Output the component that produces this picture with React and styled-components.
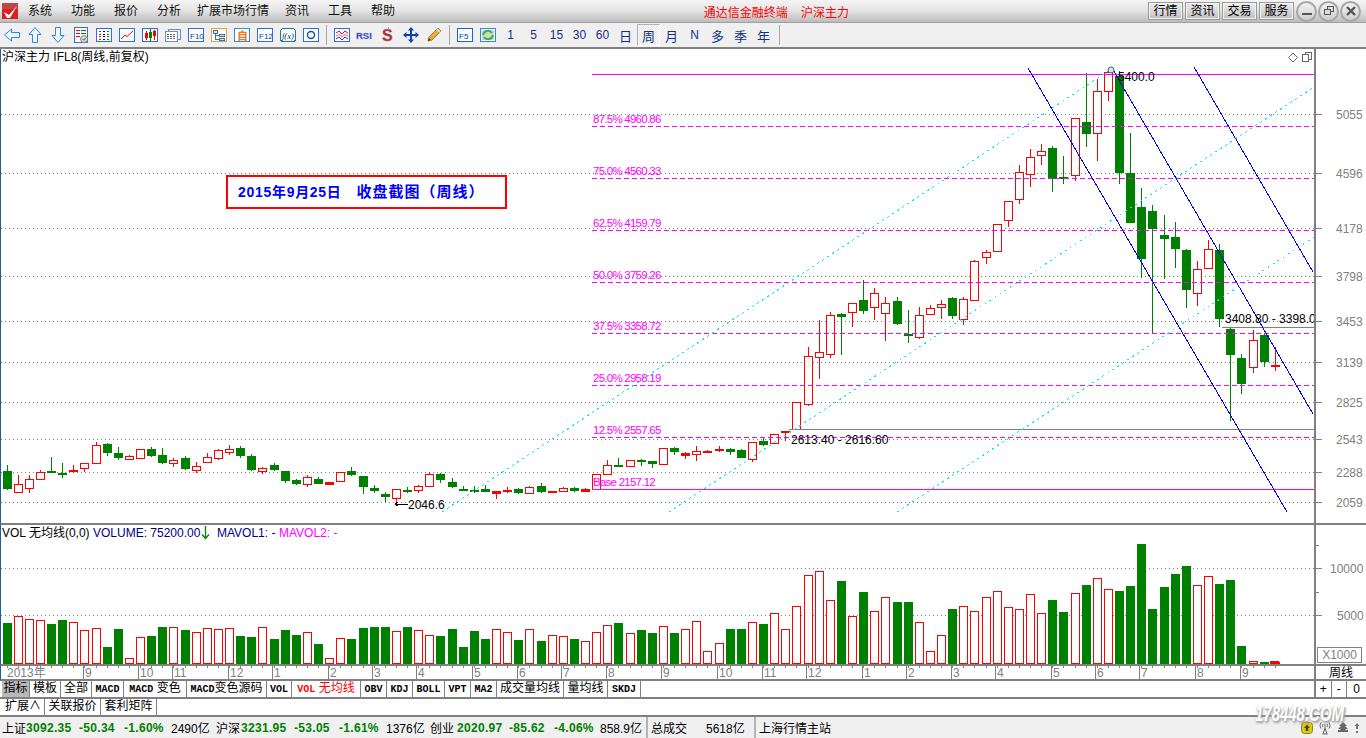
import React from "react";
import styled, { createGlobalStyle } from "styled-components";

const SANS = `"Liberation Sans", "Noto Sans CJK SC", sans-serif`;
const MONO = `"Liberation Mono", "Noto Sans CJK SC", monospace`;
const RED = "#ff0000";
const GREEN = "#008000";
const FUCHSIA = "#ff00ff";
const LINE = "#808080";

// candles are read off the chart: [colour, high, top, bottom, low], y = base + v / 3
const scale = (base, rows) =>
  rows.map(([c, h, t, b, l]) => ({
    up: c === "r",
    high: base + h / 3,
    top: base + t / 3,
    bottom: base + b / 3,
    low: base + l / 3,
  }));

const candles = [
  ...scale(430, [
    ["g", 105, 123, 177, 180], ["r", 135, 163, 185, 190], ["r", 135, 146, 173, 188], ["r", 120, 127, 146, 150],
    ["g", 82, 124, 126, 128], ["g", 100, 128, 130, 144], ["r", 105, 120, 122, 128], ["r", 100, 100, 115, 127],
    ["r", 37, 46, 98, 98], ["g", 40, 42, 68, 78], ["g", 50, 69, 84, 90], ["r", 75, 79, 86, 87],
    ["r", 58, 58, 83, 87], ["g", 52, 57, 78, 80], ["g", 55, 75, 98, 102], ["r", 85, 89, 98, 110],
    ["g", 78, 84, 117, 120], ["r", 95, 107, 119, 128], ["r", 70, 82, 97, 100], ["r", 57, 61, 85, 90],
    ["r", 45, 58, 67, 76], ["g", 48, 54, 78, 85], ["g", 72, 78, 120, 122], ["r", 110, 113, 122, 132],
    ["g", 100, 106, 120, 124], ["g", 123, 123, 152, 158], ["g", 148, 150, 161, 164], ["r", 136, 142, 163, 171],
    ["g", 142, 147, 161, 163], ["r", 155, 157, 163, 166], ["r", 127, 127, 154, 154], ["g", 112, 123, 134, 138],
    ["g", 138, 138, 170, 192], ["g", 165, 175, 182, 190], ["g", 185, 193, 197, 215], ["r", 178, 178, 203, 217],
    ["g", 170, 181, 184, 188], ["r", 165, 167, 181, 188], ["r", 127, 133, 169, 169], ["g", 128, 132, 150, 160],
    ["g", 145, 156, 170, 174], ["g", 168, 176, 178, 182], ["g", 168, 179, 182, 190], ["g", 165, 177, 185, 187],
    ["r", 182, 184, 190, 206], ["r", 172, 179, 181, 188], ["g", 175, 177, 188, 192], ["r", 168, 170, 190, 190],
    ["g", 160, 168, 185, 190], ["r", 182, 184, 187, 190], ["r", 172, 175, 184, 185], ["g", 172, 174, 182, 187],
    ["r", 175, 178, 184, 185], ["r", 133, 133, 178, 178],
  ]),
  ...scale(300, [
    ["r", 480, 496, 523, 523], ["g", 475, 495, 498, 499], ["r", 481, 481, 497, 497], ["g", 476, 481, 483, 497],
    ["g", 482, 483, 492, 503], ["r", 444, 444, 493, 493], ["g", 440, 444, 456, 465], ["r", 457, 458, 464, 476],
    ["r", 438, 454, 461, 482], ["r", 451, 453, 455, 456], ["r", 439, 446, 449, 455], ["g", 443, 447, 456, 464],
    ["g", 447, 450, 473, 473], ["r", 427, 427, 478, 485], ["g", 412, 423, 435, 438], ["r", 403, 403, 428, 428],
    ["r", 394, 394, 396, 422], ["r", 307, 307, 388, 388],
  ]),
  ...scale(60, [
    ["r", 860, 888, 1031, 1037], ["r", 780, 877, 892, 957], ["r", 756, 766, 883, 893], ["g", 760, 762, 770, 885],
    ["r", 730, 730, 757, 800], ["g", 660, 720, 752, 762], ["r", 685, 700, 740, 780], ["r", 712, 730, 760, 842],
    ["g", 712, 723, 792, 795], ["g", 750, 822, 824, 848], ["r", 742, 766, 832, 836], ["r", 736, 745, 763, 763],
    ["r", 720, 733, 742, 777], ["g", 712, 714, 767, 776], ["r", 710, 718, 778, 795], ["r", 600, 604, 721, 721],
    ["r", 571, 577, 592, 612], ["r", 493, 493, 574, 574], ["r", 424, 424, 481, 500], ["r", 315, 337, 418, 431],
    ["r", 267, 292, 343, 381], ["r", 252, 274, 284, 315], ["g", 258, 264, 358, 396], ["g", 288, 352, 354, 372],
    ["r", 175, 175, 346, 362], ["g", 40, 186, 221, 260], ["r", 58, 94, 220, 302], ["r", 30, 35, 94, 123],
    ["g", 33, 48, 339, 372], ["g", 219, 339, 488, 488], ["g", 384, 441, 596, 653], ["g", 435, 453, 507, 820],
    ["g", 465, 525, 537, 656], ["g", 486, 531, 567, 623], ["g", 568, 570, 690, 744], ["r", 603, 628, 700, 737],
    ["r", 540, 568, 625, 625], ["g", 552, 570, 776, 800], ["g", 805, 807, 885, 1082], ["g", 882, 894, 971, 1002],
    ["r", 810, 841, 922, 938], ["g", 820, 825, 906, 921], ["r", 860, 916, 919, 932],
  ]),
];

const volumeTops = [
  309, 289, 298, 301, 312, 300, 307, 331, 325, 381, 327, 415, 352, 348, 321, 322, 330, 337, 325, 328,
  325, 348, 351, 322, 357, 330, 345, 337, 372, 415, 355, 357, 324, 321, 321, 334, 321, 331, 346, 348,
  327, 381, 333, 357, 328, 337, 360, 328, 363, 346, 349, 357, 364, 337, 316, 309, 340, 330, 339, 319,
  339, 328, 304, 394, 370, 327, 327, 307, 312, 280, 328, 259, 166, 154, 241, 183, 289, 216, 274, 232,
  246, 246, 307, 394, 346, 267, 259, 274, 232, 214, 262, 268, 223, 280, 240, 276, 220, 195, 175, 208,
  213, 198, 72, 267, 201, 162, 138, 196, 169, 192, 180, 378, 424, 426, 427,
];

const slotX = (i) => Math.round(6.5 + i * 11.125);

const priceTicks = [
  [5055, 114], [4596, 173], [4178, 228], [3798, 276], [3453, 321],
  [3139, 362], [2825, 402], [2543, 439], [2288, 472], [2059, 502],
];
const fibLevels = [
  ["87.5% 4960.86", 126, 119], ["75.0% 4560.33", 178, 171], ["62.5% 4159.79", 230, 223], ["50.0% 3759.26", 282, 275],
  ["37.5% 3358.72", 333, 326], ["25.0% 2958.19", 385, 378], ["12.5% 2557.65", 437, 430],
];
const trendLines = [[1028, 68, 1287, 512], [1112, 68, 1313, 414], [1194, 67, 1313, 272]];
const channelLines = [[442, 512, 1113, 68], [669, 512, 1314, 87], [897, 512, 1314, 237]];
const months = [
  ["2013年", 5, 0], ["9", 83, 1], ["10", 138, 1], ["11", 172, 1], ["12", 228, 1], ["1", 272, 1], ["2", 328, 1], ["3", 372, 1],
  ["4", 416, 1], ["5", 472, 1], ["6", 517, 1], ["7", 561, 1], ["8", 606, 1], ["9", 661, 1], ["10", 717, 1], ["11", 762, 1],
  ["12", 806, 1], ["1", 862, 1], ["2", 906, 1], ["3", 951, 1], ["4", 995, 1], ["5", 1051, 1], ["6", 1095, 1], ["7", 1139, 1],
  ["8", 1195, 1], ["9", 1240, 1],
];

const menuItems = ["系统", "功能", "报价", "分析", "扩展市场行情", "资讯", "工具", "帮助"];
const quickButtons = ["行情", "资讯", "交易", "服务"];
const periods = ["1", "5", "15", "30", "60", "日", "周", "月", "N", "多", "季", "年"];
const tabs = [
  ["指标", 28], ["模板", 31], ["全部", 31], ["MACD", 32], ["MACD 变色", 63], ["MACD变色源码", 80], ["VOL", 25], ["VOL 无均线", 69],
  ["OBV", 26], ["KDJ", 26], ["BOLL", 32], ["VPT", 26], ["MA2", 26], ["成交量均线", 67], ["量均线", 44], ["SKDJ", 33],
];
const extraTabs = [["扩展∧", 43], ["关联报价", 56], ["套利矩阵", 56]];
const statusCells = [
  ["上证", 24, "t"], ["3092.35", 53, "n"], ["-50.34", 45, "n"], ["-1.60%", 47, "n"], ["2490亿", 45, "t"],
  ["沪深", 25, "t"], ["3231.95", 53, "n"], ["-53.05", 45, "n"], ["-1.61%", 47, "n"], ["1376亿", 44, "t"],
  ["创业", 27, "t"], ["2020.97", 52, "n"], ["-85.62", 45, "n"], ["-4.06%", 46, "n"], ["858.9亿", 46, "t"],
];

const GlobalStyle = createGlobalStyle`
  html, body { margin: 0; padding: 0; background: #fff; }
  body { font: 12px ${SANS}; color: #000; overflow: hidden; }
`;

const Frame = styled.div`
  width: 1366px;
  height: 738px;
  display: flex;
  flex-direction: column;
  position: relative;
  overflow: hidden;
`;

const MenuBar = styled.div`
  height: 22px;
  display: flex;
  align-items: center;
  background: linear-gradient(#f4f4f4, #e6e6e6 45%, #bcbcbc);
  border-bottom: 1px solid #a0a0a0;
`;
const Logo = styled.svg`
  width: 16px;
  height: 16px;
  margin: 0 0.5px 0 2px;
  flex: none;
`;
const MenuItem = styled.span`
  padding: 0 ${(p) => (p.$tight ? "6.5px" : "9.5px")};
  line-height: 22px;
  font-size: 12px;
  color: #111;
`;
const AppTitle = styled.div`
  margin: 0 auto;
  color: ${RED};
  font-size: 12px;
  white-space: pre;
`;
const QuickButtons = styled.div`
  display: flex;
  gap: 2px;
  padding-right: 2px;
`;
const QuickButton = styled.span`
  width: 33px;
  height: 16px;
  line-height: 16px;
  text-align: center;
  border: 1px solid #9a9a9a;
  background: linear-gradient(#ececec, #d6d6d6 55%, #bdbdbd);
  box-shadow: inset 0 0 0 1px #f4f4f4;
  font-size: 12px;
`;
const WindowButtons = styled.div`
  display: flex;
  gap: 1px;
  padding-right: 5px;
`;
const RoundButton = styled.span`
  width: 17px;
  height: 17px;
  border: 2px solid #a6a6a6;
  border-radius: 50%;
  display: flex;
  align-items: center;
  justify-content: center;
  background: linear-gradient(#f2f2f2, #cfcfcf);
`;

const ToolBar = styled.div`
  height: 24px;
  display: flex;
  align-items: center;
  background: #f0f0f0;
  border-bottom: 2px solid ${LINE};
`;
const ToolButton = styled.span`
  width: 23px;
  height: 22px;
  flex: none;
  display: flex;
  align-items: center;
  justify-content: center;
  color: #103088;
  font-size: ${(p) => (p.$cjk ? "13px" : "12px")};
  box-sizing: border-box;
  ${(p) =>
    p.$pressed &&
    `
    border: 1px solid;
    border-color: #b0b0b0 #fff #fff #b0b0b0;
    background: repeating-conic-gradient(#fafafa 0 25%, #e8e8e8 0 50%) 0 0 / 2px 2px;
  `}
`;
const ToolSeparator = styled.i`
  width: 1px;
  height: 20px;
  margin: 0 3px 0 4px;
  flex: none;
  background: #a8a8a8;
`;

const Pane = styled.div`
  height: ${(p) => p.$h}px;
  display: flex;
  flex: none;
  box-sizing: border-box;
  border-left: 1px solid #1f5f8f;
  border-bottom: 2px solid ${LINE};
`;
const Plot = styled.div`
  position: relative;
  width: 1313px;
  flex: none;
  overflow: hidden;
  svg { display: block; }
`;
const Axis = styled.div`
  flex: 1;
  position: relative;
  border-left: 2px solid ${LINE};
  svg { display: block; }
`;
const PaneHeader = styled.div`
  position: absolute;
  left: ${(p) => p.$left || 1}px;
  top: 1px;
  line-height: 14px;
  white-space: pre;
  color: ${(p) => p.$color || "#000"};
`;
const DownMark = styled.svg`
  position: absolute;
  left: 200px;
  top: 0;
`;
const CornerIcons = styled.svg`
  position: absolute;
  right: 0;
  top: 2px;
`;
const NoteBox = styled.div`
  position: absolute;
  left: 225px;
  top: 126px;
  width: 277px;
  height: 30px;
  border: 2px solid ${RED};
  color: #0000ff;
  font: bold 14px ${SANS};
  line-height: 29px;
  letter-spacing: 0.7px;
  text-indent: 10px;
  white-space: pre;
`;
const NoteWide = styled.span`
  font-size: 15px;
  letter-spacing: 1px;
  margin-left: 15px;
`;
const ScaleBox = styled.span`
  position: absolute;
  left: 1px;
  bottom: 1px;
  width: 43px;
  height: 14px;
  line-height: 14px;
  text-align: center;
  color: ${LINE};
  border: 1px solid ${LINE};
  font-size: 12px;
`;
const ChartText = styled.text`
  font: 12px ${SANS};
  fill: ${(p) => p.$fill || "#000"};
`;
const FibText = styled.text`
  font: 11.5px ${SANS};
  letter-spacing: -0.75px;
  fill: ${FUCHSIA};
`;
const PeriodLabel = styled.span`
  flex: 1;
  line-height: 15px;
  text-align: center;
  font-size: 12px;
`;
const KeyRow = styled.div`
  flex: 1;
  display: flex;
  align-items: stretch;
`;
const KeyCell = styled.span`
  flex: ${(p) => (p.$wide ? 1.3 : 1)};
  text-align: center;
  line-height: 16px;
  font-size: 12px;
  border-left: ${(p) => (p.$first ? "none" : `1px solid ${LINE}`)};
`;

const TabStrip = styled.div`
  height: 18px;
  flex: none;
  display: flex;
  box-sizing: border-box;
  padding-left: 2px;
  border-bottom: 2px solid ${LINE};
`;
const Tab = styled.span`
  width: ${(p) => p.$w}px;
  flex: none;
  box-sizing: border-box;
  line-height: 15px;
  text-align: center;
  white-space: pre;
  font-size: 12px;
  border-right: 1px solid ${LINE};
  color: ${(p) => (p.$hot ? RED : "#000")};
  background: ${(p) => (p.$active ? "#b8b8b8" : "transparent")};
`;
const Latin = styled.span`
  font: bold 10px ${MONO};
`;
const TabTail = styled.div`
  margin-left: auto;
  width: 52px;
  display: flex;
  box-sizing: border-box;
  border-left: 2px solid ${LINE};
`;

const StatusBar = styled.div`
  flex: 1;
  display: flex;
  align-items: center;
  background: #f0f0f0;
  padding-left: 2px;
`;
const StatusCell = styled.span`
  width: ${(p) => p.$w}px;
  flex: none;
  white-space: pre;
  ${(p) => p.$num && `color: ${GREEN}; font-weight: bold; letter-spacing: 0.3px;`}
`;
const StatusGroup = styled.span`
  flex: none;
  height: 100%;
  width: ${(p) => p.$w}px;
  display: flex;
  align-items: center;
  box-sizing: border-box;
  padding-left: 3px;
  border-left: 2px solid #b4b4b4;
  gap: ${(p) => p.$gap || 0}px;
`;
const Tray = styled.div`
  margin-left: auto;
  display: flex;
  align-items: center;
  gap: 5px;
  padding-right: 6px;
`;
const Watermark = styled.div`
  position: absolute;
  left: 1255px;
  top: 701px;
  color: #fff;
  font: italic bold 22px ${SANS};
  transform: scaleX(0.68);
  transform-origin: left;
  text-shadow: 1px 1px 1px #b0b0b0, 2px 2px 3px #999, -1px 0 1px #ccc;
`;

// --- toolbar pictures ---
const Ico = ({ children }) => (
  <svg width="18" height="18" viewBox="0 0 18 18" shapeRendering="crispEdges">
    {children}
  </svg>
);
const Box = ({ stroke = "#2a70e0" }) => <rect x="1.5" y="2.5" width="15" height="13" fill="#fff" stroke={stroke} />;
const BoxText = ({ children, fill = "#0a40a8" }) => (
  <text x="3" y="12.5" fontSize="8" fontFamily="Liberation Sans" fill={fill}>
    {children}
  </text>
);

const toolIcons = [
  <Ico><path d="M1.5 9 L8.5 3 V6.5 H16.5 V11.5 H8.5 V15 Z" fill="#f2f8ff" stroke="#2a86e8" shapeRendering="auto" /></Ico>,
  <Ico><path d="M9 1.5 L15 8.5 H11.5 V16.5 H6.5 V8.5 H3 Z" fill="#f2f8ff" stroke="#2a86e8" shapeRendering="auto" /></Ico>,
  <Ico><path d="M9 16.5 L15 9.5 H11.5 V1.5 H6.5 V9.5 H3 Z" fill="#f2f8ff" stroke="#2a86e8" shapeRendering="auto" /></Ico>,
  <Ico>
    <rect x="2.5" y="1.5" width="13" height="15" fill="#fff" stroke="#3a70c0" />
    <path d="M4 4.5h4M4 7.5h4M4 10.5h4" stroke={RED} />
    <path d="M9 4.5h5M9 7.5h5" stroke={GREEN} />
    <circle cx="12" cy="13" r="3.5" fill="#d8d8d8" stroke="#888" shapeRendering="auto" />
    <path d="M10.5 13l1.2 1.2 2-2.4" fill="none" stroke="#555" shapeRendering="auto" />
  </Ico>,
  <Ico>
    <Box />
    <path d="M4 5.5h2M4 8h2M4 10.5h2M4 13h2" stroke={RED} />
    <path d="M8 5.5h2M8 8h2M8 10.5h2M8 13h2" stroke="#0000e0" />
    <path d="M12 5.5h2M12 8h2M12 10.5h2M12 13h2" stroke={GREEN} />
  </Ico>,
  <Ico>
    <Box />
    <path d="M3 13 L7 9 L9 10.5 L15 5" fill="none" stroke={RED} shapeRendering="auto" />
  </Ico>,
  <Ico>
    <Box />
    <path d="M5 5v9M13 4v10" stroke={RED} />
    <rect x="4" y="7" width="2.5" height="5" fill={RED} />
    <path d="M9 3v12" stroke={GREEN} />
    <rect x="8" y="6" width="3" height="6" fill={GREEN} />
    <rect x="12" y="5" width="2.5" height="5" fill={RED} />
  </Ico>,
  <Ico>
    <rect x="4.5" y="3.5" width="12" height="10" fill="#eef4ff" stroke="#6a90c8" />
    <rect x="1.5" y="5.5" width="12" height="10" fill="#fff" stroke="#6a90c8" />
    <path d="M3 8.5h9M3 10.5h9M3 12.5h9" stroke="#666" strokeDasharray="2 1" />
  </Ico>,
  <Ico><Box /><BoxText>F10</BoxText></Ico>,
  <Ico>
    <Box stroke="#e8a040" />
    <rect x="3" y="4" width="4" height="3" fill="#ffe080" stroke="#3070d0" />
    <rect x="9" y="8" width="5" height="2.5" fill="#ffe080" stroke="#3070d0" />
    <rect x="9" y="12" width="5" height="2" fill="#ffe080" stroke="#3070d0" />
    <path d="M5 7v6h4M5 9h4" fill="none" stroke="#3070d0" />
  </Ico>,
  <Ico>
    <Box stroke="#2a90e0" />
    <text x="4" y="13.5" fontSize="11" fontFamily="Noto Sans CJK SC" fontWeight="700" fill="#f07820">自</text>
  </Ico>,
  <Ico><Box /><BoxText>F12</BoxText></Ico>,
  <Ico>
    <rect x="1.5" y="2.5" width="15" height="13" rx="3" fill="#fff" stroke="#108878" />
    <text x="3" y="12.5" fontSize="8.5" fontStyle="italic" fontFamily="Liberation Serif" fill="#0a2a70">f(x)</text>
  </Ico>,
  <Ico>
    <Box />
    <circle cx="9" cy="9" r="3.5" fill="none" stroke="#0a50b0" strokeWidth="1.4" shapeRendering="auto" />
  </Ico>,
];

const toolIconsB = [
  <Ico>
    <Box />
    <path d="M3 7 L6 5 L9 8 L12 5 L15 7" fill="none" stroke={RED} shapeRendering="auto" />
    <path d="M3 10 L6 8.5 L9 11 L12 8.5 L15 10" fill="none" stroke="#e060c0" shapeRendering="auto" />
    <path d="M3 13 L6 11 L9 14 L12 11 L15 13" fill="none" stroke="#2040d0" shapeRendering="auto" />
  </Ico>,
  <Ico>
    <text x="0" y="13" fontSize="9.5" fontWeight="700" fontFamily="Liberation Sans" fill="#2040b0" stroke="#8090e0" strokeWidth="0.3">RSI</text>
  </Ico>,
  <Ico>
    <text x="3" y="15" fontSize="16" fontWeight="700" fontFamily="Liberation Sans" fill="#c02828" stroke="#808080" strokeWidth="0.4">S</text>
    <path d="M9 0.5v3" stroke="#a0a0a0" />
  </Ico>,
  <Ico>
    <path d="M9 1 L12 4.5 H10 V8 H13.5 V6 L17 9 L13.5 12 V10 H10 V13.5 H12 L9 17 L6 13.5 H8 V10 H4.5 V12 L1 9 L4.5 6 V8 H8 V4.5 H6 Z" fill="#1040b8" shapeRendering="auto" />
  </Ico>,
  <Ico>
    <path d="M3 15 L4 11 L13 2 L16 5 L7 14 Z" fill="#f0a838" stroke="#a07840" shapeRendering="auto" />
    <path d="M12 3 L15 6" stroke="#e0e0e0" strokeWidth="2" shapeRendering="auto" />
    <path d="M3 15 L4 12 L6 14 Z" fill="#504030" shapeRendering="auto" />
  </Ico>,
];

const Candle = ({ c, x }) => {
  const color = c.up ? RED : GREEN;
  const top = Math.round(c.top);
  const h = Math.max(Math.round(c.bottom) - top, 1);
  const flat = h < 3;
  return (
    <g>
      <path d={`M${x + 0.5} ${Math.round(c.high)}V${Math.round(c.low)}`} stroke={color} />
      {c.up && !flat ? (
        <rect x={x - 3.5} y={top + 0.5} width="8" height={h} fill="#fff" stroke={RED} />
      ) : (
        <rect x={x - 4} y={top} width="9" height={h + (flat ? 1 : 0)} fill={color} />
      )}
    </g>
  );
};

const PricePlot = () => (
  <svg width="1313" height="475" viewBox="1 49 1313 475" shapeRendering="crispEdges">
    {priceTicks.map(([, y]) => (
      <path key={y} d={`M1 ${y + 0.5}H1314`} stroke={LINE} strokeDasharray="1 3" />
    ))}
    {candles.map((c, i) => (
      <Candle key={i} c={c} x={slotX(i)} />
    ))}
    <path d="M592 74.5H1314M592 489.5H1314" stroke={FUCHSIA} />
    {fibLevels.map(([, y]) => (
      <path key={y} d={`M592 ${y + 0.5}H1314`} stroke={FUCHSIA} strokeDasharray="5 3" />
    ))}
    <path d="M1222 327.5H1314M789 429.5H1314" stroke={LINE} />
    {channelLines.map(([a, b, c, d]) => (
      <line key={a} x1={a} y1={b} x2={c} y2={d} stroke="#00eef5" strokeDasharray="2 4" />
    ))}
    {trendLines.map(([a, b, c, d]) => (
      <line key={a} x1={a} y1={b} x2={c} y2={d} stroke="#0000ff" />
    ))}
    {fibLevels.map(([t, , y]) => (
      <FibText key={t} x="593" y={y + 4}>{t}</FibText>
    ))}
    <FibText x="593" y="486">Base 2157.12</FibText>
    <ChartText x="1118" y="81">5400.0</ChartText>
    <ChartText x="1225" y="323">3408.80 - 3398.0</ChartText>
    <ChartText x="791" y="444">2613.40 - 2616.60</ChartText>
    <path d="M395 504H408M395 504l3-2M395 504l3 2" stroke="#000" fill="none" />
    <ChartText x="408" y="509">2046.6</ChartText>
    <circle cx="1111" cy="70" r="3" fill="#d8e8f0" stroke="#406080" shapeRendering="auto" />
  </svg>
);

const VolumePlot = () => (
  <svg width="1313" height="139" viewBox="1 525 1313 139" shapeRendering="crispEdges">
    <path d="M1 568.5H1314M1 615.5H1314" stroke={LINE} strokeDasharray="1 3" />
    {volumeTops.map((v, i) => {
      const x = slotX(i);
      const y = Math.round(520 + v / 3);
      return candles[i].up ? (
        <rect key={i} x={x - 3.5} y={y + 0.5} width="8" height={663 - y} fill="#fff" stroke={RED} />
      ) : (
        <rect key={i} x={x - 4} y={y} width="9" height={664 - y} fill={GREEN} />
      );
    })}
    <rect x="1270" y="661" width="9" height="3" fill={RED} />
  </svg>
);

const DateStrip = () => (
  <svg width="1313" height="13" viewBox="1 666 1313 13" shapeRendering="crispEdges">
    {candles.map((_, i) => (
      <path key={i} d={`M${slotX(i) + 0.5} 666V668`} stroke={LINE} />
    ))}
    {months.map(([t, x, tick]) => (
      <g key={t + x}>
        {tick === 1 && <path d={`M${x + 0.5} 666V680`} stroke={LINE} />}
        <ChartText x={x + 2} y="677" $fill={LINE}>{t}</ChartText>
      </g>
    ))}
  </svg>
);

const tabLabel = (text) =>
  text.split(/([A-Z0-9]+)/).map((part, i) => (/[A-Z0-9]/.test(part) ? <Latin key={i}>{part}</Latin> : part));

const App = () => {
  return (
    <Frame>
      <GlobalStyle />
      <MenuBar>
        <Logo viewBox="0 0 16 16">
          <rect width="16" height="16" fill="#d82020" />
          <rect width="16" height="6" fill="#c04848" />
          <path d="M2 9 L7 12 L15 3 L8 15 L5 15 Z" fill="#fff" />
        </Logo>
        {menuItems.map((m) => (
          <MenuItem key={m} $tight={m.length > 2}>{m}</MenuItem>
        ))}
        <AppTitle>通达信金融终端    沪深主力</AppTitle>
        <QuickButtons>
          {quickButtons.map((b) => (
            <QuickButton key={b}>{b}</QuickButton>
          ))}
        </QuickButtons>
        <WindowButtons>
          <RoundButton>
            <svg width="12" height="12" viewBox="0 0 12 12"><path d="M1 9h10" stroke="#555" strokeWidth="2" /></svg>
          </RoundButton>
          <RoundButton>
            <svg width="12" height="12" viewBox="0 0 12 12" shapeRendering="crispEdges">
              <rect x="4.5" y="1.5" width="6" height="5" fill="#ddd" stroke="#555" />
              <rect x="1.5" y="4.5" width="6" height="5" fill="#ddd" stroke="#555" />
            </svg>
          </RoundButton>
          <RoundButton>
            <svg width="12" height="12" viewBox="0 0 12 12"><path d="M2 2l8 8M10 2l-8 8" stroke="#555" strokeWidth="2.4" /></svg>
          </RoundButton>
        </WindowButtons>
      </MenuBar>

      <ToolBar>
        {toolIcons.map((ic, i) => (
          <ToolButton key={i}>{ic}</ToolButton>
        ))}
        <ToolSeparator />
        {toolIconsB.map((ic, i) => (
          <ToolButton key={i}>{ic}</ToolButton>
        ))}
        <ToolSeparator />
        <ToolButton>
          <Ico><Box stroke="#1068d8" /><BoxText>F5</BoxText></Ico>
        </ToolButton>
        <ToolButton>
          <Ico>
            <Box stroke="#3080f0" />
            <rect x="3" y="4" width="12" height="10" fill="#c8dcc8" />
            <path d="M4 9 A5 5 0 0 1 13 7 M14 9 A5 5 0 0 1 5 11" fill="none" stroke="#40b040" strokeWidth="2" shapeRendering="auto" />
          </Ico>
        </ToolButton>
        {periods.map((p) => (
          <ToolButton key={p} $pressed={p === "周"} $cjk={/[^0-9N]/.test(p)}>{p}</ToolButton>
        ))}
        <ToolSeparator />
      </ToolBar>

      <Pane $h={476}>
        <Plot>
          <PricePlot />
          <PaneHeader>沪深主力 IFL8(周线,前复权)</PaneHeader>
          <CornerIcons width="30" height="14" viewBox="0 0 30 14" shapeRendering="crispEdges">
            <path d="M9 2 L13.5 6.5 L9 11 L4.5 6.5 Z" fill="#fff" stroke="#666" shapeRendering="auto" />
            <rect x="21.5" y="1.5" width="6" height="7" fill="#fff" stroke="#666" />
            <rect x="18.5" y="3.5" width="6" height="7" fill="#fff" stroke="#666" />
          </CornerIcons>
          <NoteBox>2015年9月25日<NoteWide>收盘截图（周线）</NoteWide></NoteBox>
        </Plot>
        <Axis>
          <svg width="50" height="475" viewBox="1315 49 50 475" shapeRendering="crispEdges">
            {priceTicks.map(([t, y]) => (
              <g key={t}>
                <path d={`M1315 ${y + 0.5}H1321`} stroke={LINE} />
                <ChartText x="1335" y={y + 5} $fill={LINE}>{t}</ChartText>
              </g>
            ))}
          </svg>
        </Axis>
      </Pane>

      <Pane $h={141}>
        <Plot>
          <VolumePlot />
          <PaneHeader>VOL 无均线(0,0)</PaneHeader>
          <PaneHeader $left={92} $color="#000080">VOLUME: 75200.00</PaneHeader>
          <DownMark width="9" height="15" viewBox="0 0 9 15" fill="none" stroke={GREEN}>
            <path d="M4.5 1V13M1 9.5L4.5 13.5L8 9.5" strokeWidth="1.3" />
          </DownMark>
          <PaneHeader $left={216} $color="#000080">MAVOL1: -</PaneHeader>
          <PaneHeader $left={278} $color={FUCHSIA}>MAVOL2: -</PaneHeader>
        </Plot>
        <Axis>
          <svg width="50" height="139" viewBox="1315 525 50 139" shapeRendering="crispEdges">
            <path d="M1315 568.5H1321M1315 615.5H1321M1315 592.5H1318M1315 545.5H1318" stroke={LINE} />
            <ChartText x="1329" y="573" $fill={LINE}>10000</ChartText>
            <ChartText x="1336" y="620" $fill={LINE}>5000</ChartText>
          </svg>
          <ScaleBox>X1000</ScaleBox>
        </Axis>
      </Pane>

      <Pane $h={15}>
        <Plot><DateStrip /></Plot>
        <Axis as={PeriodLabel}>周线</Axis>
      </Pane>

      <TabStrip>
        {tabs.map(([t, w]) => (
          <Tab key={t} $w={w} $active={t === "指标"} $hot={t === "VOL 无均线"}>{tabLabel(t)}</Tab>
        ))}
        <TabTail>
          <KeyRow>
            <KeyCell $first>+</KeyCell>
            <KeyCell>-</KeyCell>
            <KeyCell $wide>0</KeyCell>
          </KeyRow>
        </TabTail>
      </TabStrip>

      <TabStrip>
        {extraTabs.map(([t, w]) => (
          <Tab key={t} $w={w}>{t}</Tab>
        ))}
      </TabStrip>

      <StatusBar>
        {statusCells.map(([t, w, kind], i) => (
          <StatusCell key={i} $w={w} $num={kind === "n"}>{t}</StatusCell>
        ))}
        <StatusGroup $w={108} $gap={19}>
          <span>总成交</span>
          <span>5618亿</span>
        </StatusGroup>
        <StatusGroup $w={120}>上海行情主站</StatusGroup>
        <Tray>
          <svg width="12" height="12" viewBox="0 0 12 12"><rect x="0.5" y="0.5" width="11" height="11" rx="3" fill="#d8c820" stroke="#908010" /><path d="M6 2.5L9 6H7.2V9H4.8V6H3Z" fill="#504808" /></svg>
          <svg width="14" height="14" viewBox="0 0 14 14" fill="none" stroke="#666"><path d="M7 3v4M5 13l2-6 2 6M4.5 13h5M3 1.5a5 5 0 0 0 0 6M11 1.5a5 5 0 0 1 0 6M5 3a2.5 2.5 0 0 0 0 3M9 3a2.5 2.5 0 0 1 0 3" /></svg>
          <svg width="12" height="12" viewBox="0 0 12 12" fill="#666"><path d="M6 0l4 4H8l3 3H8.5v1H11v2H1V8h2.5V7H1l3-3H2z" /></svg>
          <svg width="6" height="12" viewBox="0 0 6 12" fill="#777"><path d="M3 1l2.5 3H4v3H2V4H.5zM2 9h2v2H2z" /></svg>
        </Tray>
      </StatusBar>
      <Watermark>178448.COM</Watermark>
    </Frame>
  );
};

export default App;
